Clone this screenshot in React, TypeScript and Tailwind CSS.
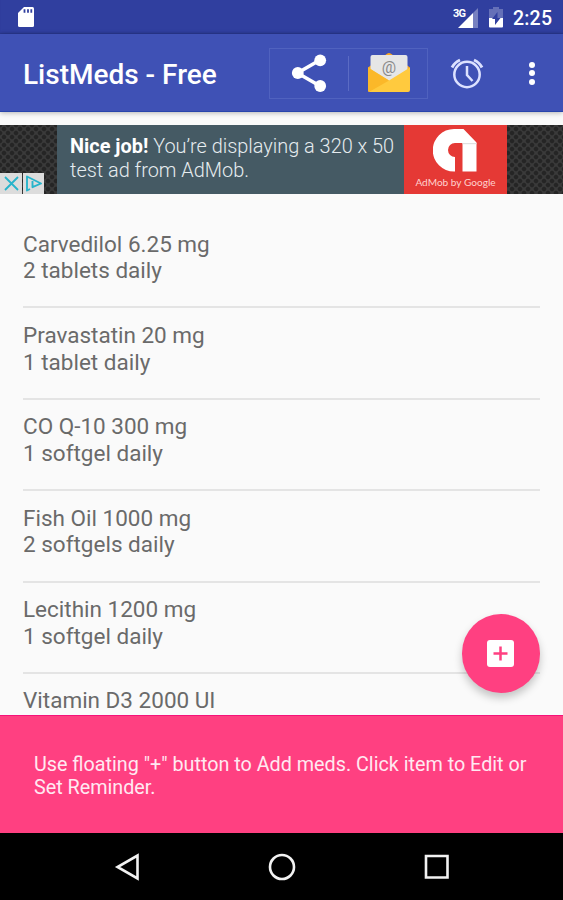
import type { ReactNode } from "react";

interface Med {
  name: string;
  dose?: string;
}

const meds: Med[] = [
  { name: "Carvedilol 6.25 mg", dose: "2 tablets daily" },
  { name: "Pravastatin 20 mg", dose: "1 tablet daily" },
  { name: "CO Q-10 300 mg", dose: "1 softgel daily" },
  { name: "Fish Oil 1000 mg", dose: "2 softgels daily" },
  { name: "Lecithin 1200 mg", dose: "1 softgel daily" },
  { name: "Vitamin D3 2000 UI" },
];

const StatusBar = () => (
  <div className="flex h-[34px] shrink-0 items-center bg-[#303f9f] pr-[11px] pl-[17px] shadow-[inset_0_-2px_2px_-1px_#28368a]">
    <svg className="h-[22px] w-[18px]" viewBox="0 0 18 22">
      <path
        fill="#fff"
        d="M7 1h8.500A1.500 1.500 0 0 1 17 2.500v17a1.500 1.500 0 0 1-1.500 1.500h-13A1.500 1.500 0 0 1 1 19.500V7z"
      />
      <path stroke="#303f9f" strokeWidth="1.800" d="M7.500 3.200v3.600M11 3.200v3.600M14.300 3.200v3.600" />
    </svg>
    <div className="ml-auto flex items-center">
      <svg className="h-[22px] w-[27px]" viewBox="0 0 27 22">
        <path fill="#7680c0" d="M26 2v20h-5V7z" />
        <path fill="#fff" d="M21 7v15H6z" />
        <text
          x="1"
          y="10.500"
          fill="#fff"
          fontFamily="Roboto, sans-serif"
          fontSize="11"
          fontWeight="700"
          letterSpacing="-0.700"
        >
          3G
        </text>
      </svg>
      <svg className="ml-[9px] h-[22px] w-[16px]" viewBox="0 0 16 22">
        <path fill="#6570b8" d="M5 1h6v2h4v9H1V3h4z" />
        <path fill="#fff" d="M1 12h14v8.500a1 1 0 0 1-1 1H2a1 1 0 0 1-1-1z" />
        <path fill="#303f9f" d="M9.500 6v6H12.500L7 19v-6H4z" />
      </svg>
      <span className="mt-[3px] ml-[9px] w-[39px] text-[19.500px] leading-none font-medium tracking-[0.2px] whitespace-nowrap text-white">
        2:25
      </span>
    </div>
  </div>
);

const ShareIcon = () => (
  <svg className="h-10 w-10" viewBox="0 0 40 40">
    <path fill="none" stroke="#fff" strokeWidth="3.600" d="M31 7 8.500 20 31 33" />
    <circle cx="31.200" cy="7.300" r="5.900" fill="#fff" />
    <circle cx="8.800" cy="20" r="5.900" fill="#fff" />
    <circle cx="31.200" cy="33" r="5.900" fill="#fff" />
  </svg>
);

const MailIcon = () => (
  <svg className="h-10 w-[42px]" viewBox="0 0 42 40">
    <path fill="#f9a825" d="M0 14.500 19 .8a3.200 3.200 0 0 1 4 0l19 13.700v6H0z" />
    <path fill="#e6e6e6" d="M4.500 2h33a2 2 0 0 1 2 2V24L21 34 2.500 24V4a2 2 0 0 1 2-2z" />
    <path fill="#ffca3e" d="m0 14.500 21 13 21-13V37a2 2 0 0 1-2 2H2a2 2 0 0 1-2-2z" />
    <path fill="#fbb829" d="m0 14.500 21 13L1 39a2 2 0 0 1-1-2z" />
    <text
      x="21"
      y="19.500"
      fill="#8a8a8a"
      textAnchor="middle"
      fontFamily="Roboto, sans-serif"
      fontSize="16"
    >
      @
    </text>
  </svg>
);

const AlarmIcon = () => (
  <svg className="h-8 w-[34px]" viewBox="0 0 34 32" fill="none" stroke="#dce1ff">
    <circle cx="17" cy="17.500" r="12.700" strokeWidth="2.500" />
    <path strokeWidth="2.500" d="M17 9v9l5.500 6" />
    <path strokeWidth="2.900" d="M2 10.500Q4.500 5.500 10 3M24 3Q29.500 5.500 32 10.500" />
  </svg>
);

const AppBar = () => (
  <header className="relative z-10 flex h-[78px] shrink-0 items-center border-b border-[#2945ac] bg-[#3f51b5] pl-[23px] shadow-[0_1px_5px_rgba(0,0,0,0.28)]">
    <h1 className="mt-[5px] w-[246px] text-[28px] leading-none font-medium whitespace-nowrap text-white">
      ListMeds - Free
    </h1>
    <div className="mt-px flex h-[51px] w-[159px] items-center border border-[#5062bf]">
      <div className="flex w-[78px] justify-center">
        <ShareIcon />
      </div>
      <div className="h-[35px] w-px bg-[#5b6bc4]" />
      <div className="flex w-[79px] justify-center pl-[2px]">
        <MailIcon />
      </div>
    </div>
    <div className="mt-px ml-[22px]">
      <AlarmIcon />
    </div>
    <div className="mt-px ml-[45px] flex flex-col gap-[2.500px]">
      <i className="size-[6px] rounded-full bg-white" />
      <i className="size-[6px] rounded-full bg-white" />
      <i className="size-[6px] rounded-full bg-white" />
    </div>
  </header>
);

const AdMobLogo = () => (
  <svg className="-ml-px h-[44px] w-[44px]" viewBox="0 0 44 44">
    <path
      fill="#fff"
      d="M21 0h9.500L43.500 13.500v29H29.500V14h-7.500a7 7 0 0 0 0 14v14.500h-1A21.250 21.250 0 0 1 21 0z"
    />
    <path fill="#e0e0e0" d="M29.500 14h14v1.200h-14z" />
  </svg>
);

const AdBanner = () => (
  <div className="mt-[13px] flex h-[69px] shrink-0 bg-[#3a3a3a] bg-[radial-gradient(#252525_30%,transparent_50%),radial-gradient(#252525_30%,transparent_50%)] bg-[length:8px_8px] bg-[position:0_0,4px_4px]">
    <div className="flex w-[57px] items-end gap-px">
      <div className="flex h-[21px] w-[22px] items-center justify-center bg-[#dcdcdc]">
        <svg className="size-[15px]" viewBox="0 0 15 15" stroke="#27b4cb" strokeWidth="1.800">
          <path d="m1 1 13 13M14 1 1 14" />
        </svg>
      </div>
      <div className="flex h-[21px] w-[21px] items-center justify-center bg-[#dcdcdc]">
        <svg
          className="h-[17px] w-[17px]"
          viewBox="0 0 17 17"
          fill="none"
          stroke="#27b4cb"
          strokeWidth="1.900"
          strokeLinejoin="round"
        >
          <path d="M5 14 2 15.500v-14l14 7-8.500 3.700V6" />
        </svg>
      </div>
    </div>
    <div className="w-[347px] bg-[#455a64] pt-[10px] pl-[13px] text-[19.900px] leading-[23.500px] font-light whitespace-nowrap text-[#e6ecef]">
      <b className="font-bold text-white">Nice job!</b> You’re displaying a 320 x 50
      <br />
      test ad from AdMob.
    </div>
    <div className="flex w-[103px] flex-col items-center bg-[#e53935] pt-[4px]">
      <AdMobLogo />
      <span className="mt-[3px] font-[Lato] text-[10.100px] leading-[13px] whitespace-nowrap text-[#ffd2cf]">
        AdMob by Google
      </span>
    </div>
  </div>
);

const MedRow = ({ name, dose }: Med) => (
  <li className="h-[91.400px] border-b-2 border-[#e4e4e4] pt-[13.500px] text-[22.500px] leading-[26.700px] text-[#6a6a6a]">
    <p>{name}</p>
    {dose && <p>{dose}</p>}
  </li>
);

const NavButton = ({ children }: { children: ReactNode }) => (
  <svg className="size-7" viewBox="0 0 28 28" fill="none" stroke="#f2f2f2" strokeWidth="2.600">
    {children}
  </svg>
);

export default function App() {
  return (
    <div className="flex h-[900px] w-[563px] flex-col overflow-hidden bg-[#fafafa] font-[Roboto,sans-serif]">
      <StatusBar />
      <AppBar />
      <AdBanner />
      <main className="relative min-h-0 flex-1 overflow-hidden px-[23px] pt-[23px]">
        <ul>
          {meds.map((med) => (
            <MedRow key={med.name} {...med} />
          ))}
        </ul>
        <button className="absolute top-[420px] right-[23px] flex size-[78.500px] items-center justify-center rounded-full bg-[#ff4081] shadow-[0_5px_8px_rgba(0,0,0,0.22)]">
          <svg className="size-[27px]" viewBox="0 0 27 27">
            <rect width="27" height="27" rx="3" fill="#fff" />
            <path stroke="#ff4081" strokeWidth="2.500" d="M13.500 6.500v14M6.500 13.500h14" />
          </svg>
        </button>
      </main>
      <div className="h-[118px] shrink-0 border-t border-[#f5127a] bg-[#ff4081] pt-[36.500px] pl-[34px] text-[19.750px] leading-[23px] whitespace-nowrap text-[#ffe9f1]">
        Use floating "+" button to Add meds. Click item to Edit or
        <br />
        Set Reminder.
      </div>
      <nav className="flex h-[67px] shrink-0 items-center justify-center gap-[127px] bg-black">
        <NavButton>
          <path d="M24.500 2.500v23L4.500 14z" />
        </NavButton>
        <NavButton>
          <circle cx="14" cy="14" r="12" />
        </NavButton>
        <NavButton>
          <path d="M3 3h21.500v21.500H3z" />
        </NavButton>
      </nav>
    </div>
  );
}
